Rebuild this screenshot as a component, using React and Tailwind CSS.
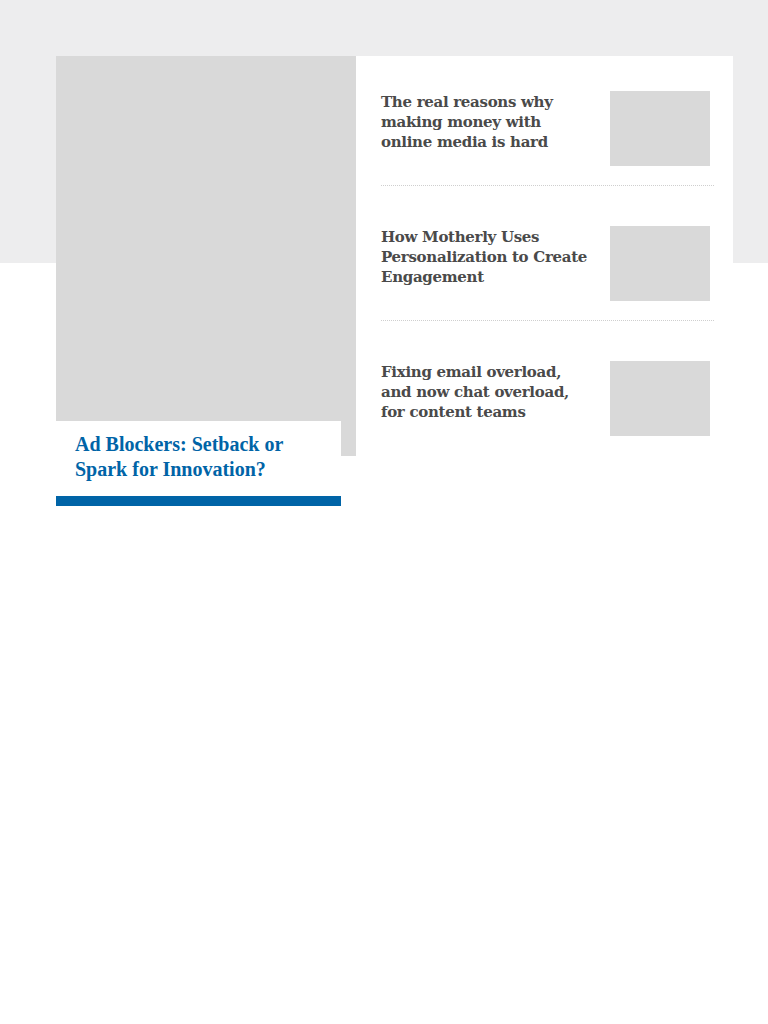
const posts = [
  'The real reasons why making money with online media is hard',
  'How Motherly Uses Personalization to Create Engagement',
  'Fixing email overload, and now chat overload, for content teams',
];

export default function App() {
  return (
    <div className="min-h-[1024px] bg-white relative">
      <div className="absolute inset-x-0 top-0 h-[263px] bg-[#ededee]" />
      <div className="relative flex pt-[56px] pl-[56px]">
        {/* Featured */}
        <div className="w-[300px] shrink-0">
          <div className="h-[400px] bg-[#d9d9d9]" />
          <div className="-mt-[35px] w-[285px] relative">
            <div className="bg-white px-[19px] pt-[11px] pb-[14px]">
              <h2 className="text-[20px] leading-[25px] font-bold text-[#0064a7] [font-family:'Liberation_Serif',serif]">
                Ad Blockers: Setback or Spark for Innovation?
              </h2>
            </div>
            <div className="h-[10px] bg-[#0064a7]" />
          </div>
        </div>

        {/* List */}
        <div className="w-[377px] bg-white pl-[25px] pr-[19px] pt-[35px] self-start">
          {posts.map((t, i) => (
            <div key={i}>
              {i > 0 && <div className="h-[40px]" />}
              <div className="flex justify-between pr-[4px]">
                <h3 className="w-[215px] pt-[1px] text-[15px] leading-[20px] tracking-[-0.3px] font-bold text-[#4a4a4a] [font-family:'DejaVu_Serif',serif]">
                  {t}
                </h3>
                <div className="w-[100px] h-[75px] bg-[#d9d9d9]" />
              </div>
              {i < posts.length - 1 && (
                <div className="mt-[19px] border-t border-dotted border-[#cfcfcf]" />
              )}
            </div>
          ))}
        </div>
      </div>
    </div>
  );
}
